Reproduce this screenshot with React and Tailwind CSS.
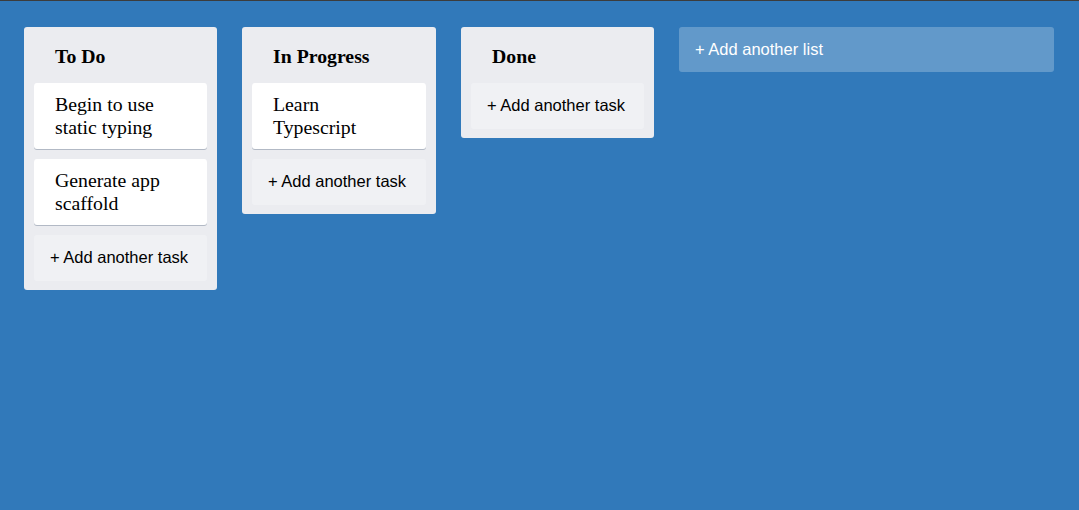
const columns = [
  { title: 'To Do', width: 'w-[193px]', tasks: ['Begin to use static typing', 'Generate app scaffold'] },
  { title: 'In Progress', width: 'w-[194px]', tasks: ['Learn Typescript'] },
  { title: 'Done', width: 'w-[193px]', tasks: [] },
];

const Card = ({ text }) => (
  <div className="bg-white rounded-[3px] py-[10px] pl-[21px] pr-5 shadow-[0_1px_0_0_#091e4240] text-[19.8px] leading-[23px] text-black font-['Liberation_Serif',serif]">
    {text}
  </div>
);

const AddTask = () => (
  <button className="w-full text-left bg-[#f0f1f4] rounded-[3px] pt-[11px] pb-[13px] px-4 text-[16.5px] leading-[22px] text-black font-['Liberation_Sans',Arial,sans-serif]">
    + Add another task
  </button>
);

const Column = ({ title, width, tasks }) => (
  <div className={`${width} shrink-0 bg-[#ebecf0] rounded-[3px] p-[10px] pb-[9px] flex flex-col gap-[10px]`}>
    <div className="pl-[21px] pt-[7px] pb-[5px] text-[19.8px] leading-[24px] font-bold text-black font-['Liberation_Serif',serif]">
      {title}
    </div>
    {tasks.map(t => <Card key={t} text={t} />)}
    <AddTask />
  </div>
);

export default function App() {
  return (
    <div className="w-[1079px] h-[510px] bg-[#3179ba] border-t border-[#3c3c3c] flex items-start gap-[25px] pl-[24px] pt-[26px]">
      {columns.map(c => <Column key={c.title} {...c} />)}
      <button className="w-[375px] h-[45px] text-left bg-[#ffffff3d] rounded-[3px] px-4 text-[16.5px] text-white font-['Liberation_Sans',Arial,sans-serif]">
        + Add another list
      </button>
    </div>
  );
}
